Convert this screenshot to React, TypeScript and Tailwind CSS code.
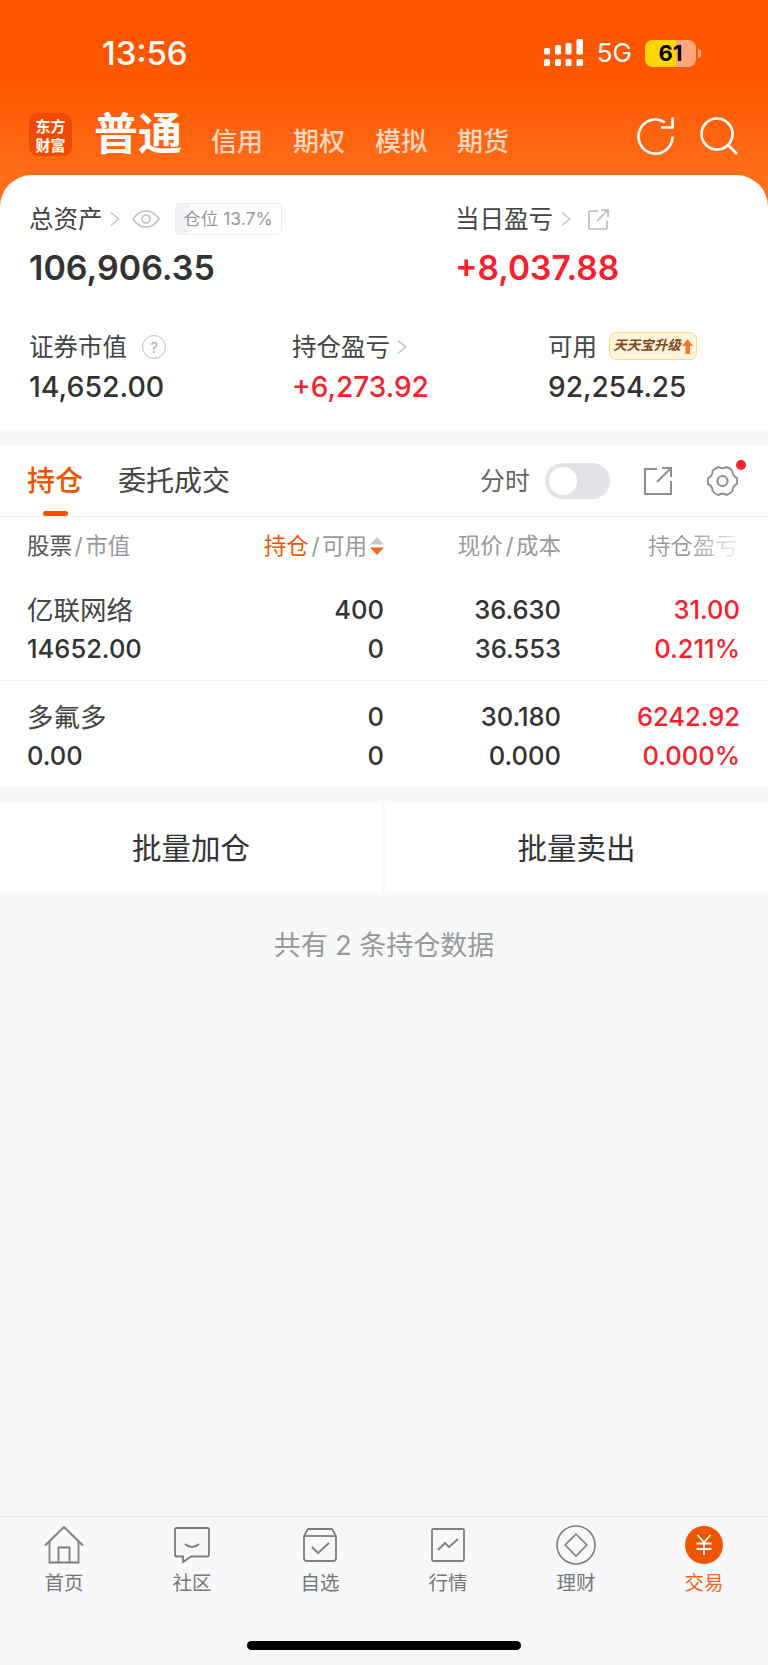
import React from "react";

const RED = "text-[#f5222d]";

function Chevron({ className = "" }: { className?: string }) {
  return (
    <svg width="10" height="16" viewBox="0 0 10 16" fill="none" className={className}>
      <path d="M1 1.5 L8.5 8 L1 14.5" stroke="#c4c4c4" strokeWidth="1.6" />
    </svg>
  );
}

function SignalIcon() {
  return (
    <svg width="40" height="28" viewBox="0 0 40 28" fill="#fff">
      <rect x="0" y="9" width="6" height="6.5" rx="1.5" />
      <rect x="11" y="6" width="6" height="9.5" rx="1.5" />
      <rect x="21.5" y="4" width="6" height="11.5" rx="1.5" />
      <rect x="32.5" y="0" width="6.5" height="15.5" rx="1.5" />
      <rect x="0" y="20" width="6" height="7" rx="1.5" />
      <rect x="11" y="20" width="6" height="7" rx="1.5" />
      <rect x="21.5" y="20" width="6" height="7" rx="1.5" />
      <rect x="32.5" y="20" width="6.5" height="7" rx="1.5" />
    </svg>
  );
}

function Battery() {
  return (
    <div className="flex items-center ml-[13px]">
      <div className="relative w-[51px] h-[27px] rounded-[8px] overflow-hidden bg-[#ffa67f] flex items-center justify-center">
        <div className="absolute left-0 top-0 bottom-0 w-[31px] bg-[#ffd60a]" />
        <span className="relative text-[22px] leading-none font-bold text-black">61</span>
      </div>
      <div className="w-[3px] h-[9px] ml-[2px] rounded-r-full bg-[#ffa67f]" />
    </div>
  );
}

function RefreshIcon() {
  return (
    <svg width="39" height="38" viewBox="0 0 39 38" fill="none" stroke="#fff" strokeWidth="2.6">
      <path d="M35.5 19.5 A17 17 0 1 1 28 5.5" />
      <path d="M24 10.5 H35.5 V0.5" />
    </svg>
  );
}

function SearchIcon() {
  return (
    <svg width="38" height="38" viewBox="0 0 38 38" fill="none" stroke="#fff" strokeWidth="2.6">
      <circle cx="17" cy="17" r="15.5" />
      <path d="M28 28 L37 37" />
    </svg>
  );
}

function EyeIcon() {
  return (
    <svg width="28" height="18" viewBox="0 0 28 18" fill="none" stroke="#c2c2c2" strokeWidth="1.6">
      <path d="M1 9 C5 3 9 1 14 1 C19 1 23 3 27 9 C23 15 19 17 14 17 C9 17 5 15 1 9 Z" />
      <circle cx="14" cy="9" r="4" />
    </svg>
  );
}

function SmallShare() {
  return (
    <svg width="21" height="21" viewBox="0 0 21 21" fill="none" stroke="#bdbdbd" strokeWidth="1.7">
      <path d="M10 2 H3 Q1 2 1 4 V18 Q1 20 3 20 H17 Q19 20 19 18 V12" />
      <path d="M9 12 L19.5 1.5 M13 1.2 H20 V8" />
    </svg>
  );
}

function ShareIcon() {
  return (
    <svg width="28" height="28" viewBox="0 0 28 28" fill="none" stroke="#8f8f8f" strokeWidth="2">
      <path d="M13 2 H1 V27 H27 V14" />
      <path d="M13 15 L26.5 1.5 M18 1 H27 V10" />
    </svg>
  );
}

function GearIcon() {
  return (
    <svg width="33" height="32" viewBox="0 0 33 32" fill="none" stroke="#8f8f8f" strokeWidth="1.9">
      <path d="M12.5 2 C14.5 3.6 18.5 3.6 20.5 2 C23 2.8 25 4 26.5 6 C26 8.6 28 12 30.8 13 C31.4 15.2 31.4 16.8 30.8 19 C28 20 26 23.4 26.5 26 C25 28 23 29.2 20.5 30 C18.5 28.4 14.5 28.4 12.5 30 C10 29.2 8 28 6.5 26 C7 23.4 5 20 2.2 19 C1.6 16.8 1.6 15.2 2.2 13 C5 12 7 8.6 6.5 6 C8 4 10 2.8 12.5 2 Z" />
      <circle cx="16.5" cy="16" r="5" strokeWidth="2.2" />
    </svg>
  );
}

function SortIcon() {
  return (
    <svg width="14" height="18" viewBox="0 0 14 18" className="ml-[3px]">
      <path d="M7 0 L14 7.5 H0 Z" fill="#c9c9c9" />
      <path d="M0 10.5 H14 L7 18 Z" fill="#f2661b" />
    </svg>
  );
}

const navIcons: Record<string, React.ReactNode> = {
  home: (
    <svg width="40" height="38" viewBox="0 0 40 38" fill="none" stroke="#7d7d7d" strokeWidth="1.8">
      <path d="M1 19.5 L20 1 L39 19.5" />
      <path d="M5.5 15.5 V36.5 H34.5 V15.5" />
      <path d="M14.5 36.5 V21.5 H25.5 V36.5" />
    </svg>
  ),
  chat: (
    <svg width="36" height="36" viewBox="0 0 36 36" fill="none" stroke="#7d7d7d" strokeWidth="1.8">
      <path d="M2.5 1 H33.5 Q35 1 35 2.5 V28 Q35 29.5 33.5 29.5 H17 L9 35 V29.5 H2.5 Q1 29.5 1 28 V2.5 Q1 1 2.5 1 Z" />
      <path d="M11 17 Q18 23 25 17" />
    </svg>
  ),
  watch: (
    <svg width="34" height="34" viewBox="0 0 34 34" fill="none" stroke="#7d7d7d" strokeWidth="1.8">
      <path d="M5 1 H29 L33 8 V30 Q33 33 30 33 H4 Q1 33 1 30 V8 Z" />
      <path d="M1 8 H33" />
      <path d="M9 19 L15 25 L26 15" />
    </svg>
  ),
  market: (
    <svg width="34" height="34" viewBox="0 0 34 34" fill="none" stroke="#7d7d7d" strokeWidth="1.8">
      <rect x="1" y="1" width="32" height="32" rx="1.5" />
      <path d="M7 22 L14 15 L18 19 L27 11" />
    </svg>
  ),
  finance: (
    <svg width="40" height="40" viewBox="0 0 40 40" fill="none" stroke="#7d7d7d" strokeWidth="1.6">
      <circle cx="20" cy="20" r="19" />
      <path d="M20 9 L31 20 L20 31 L9 20 Z" strokeLinejoin="round" />
    </svg>
  ),
  trade: (
    <svg width="38" height="38" viewBox="0 0 38 38" fill="none">
      <circle cx="19" cy="19" r="19" fill="#ee5500" />
      <path d="M12.5 9 L19 16.5 L25.5 9 M19 16.5 V29 M11.5 17.5 H26.5 M11.5 23 H26.5" stroke="#fff" strokeWidth="1.8" />
    </svg>
  ),
};

const navItems = [
  { key: "home", label: "首页" },
  { key: "chat", label: "社区" },
  { key: "watch", label: "自选" },
  { key: "market", label: "行情" },
  { key: "finance", label: "理财" },
  { key: "trade", label: "交易", active: true },
];

const positions = [
  { name: "亿联网络", value: "14652.00", hold: "400", avail: "0", price: "36.630", cost: "36.553", pl: "31.00", pct: "0.211%" },
  { name: "多氟多", value: "0.00", hold: "0", avail: "0", price: "30.180", cost: "0.000", pl: "6242.92", pct: "0.000%" },
];

const subTabs = ["信用", "期权", "模拟", "期货"];

export default function App() {
  return (
    <div className="w-[768px] h-[1665px] flex flex-col overflow-hidden bg-[#f7f8fa] text-[#333] font-['Inter','Noto_Sans_CJK_SC',sans-serif]">
      <div className="bg-[linear-gradient(180deg,#ff5500_0px,#ff5600_70px,#ff7420_210px)]">
        {/* 状态栏 */}
        <div className="h-[103px] flex items-center pt-[3px] pl-[102px] pr-[67px] text-white">
          <span className="text-[33px] leading-none font-medium">13:56</span>
          <div className="ml-auto flex items-center">
            <SignalIcon />
            <span className="ml-[13px] text-[26px] leading-none">5G</span>
            <Battery />
          </div>
        </div>

        {/* 账户类型 */}
        <div className="h-[72px] flex items-start pl-[29px] pr-[30px] text-white">
          <div className="mt-[10px] w-[43px] h-[43px] rounded-[9px] bg-[#f04a06] flex flex-col items-center justify-center text-[15px] leading-[19px] font-bold font-['Noto_Sans_CJK_SC',sans-serif]">
            <span>东方</span>
            <span>财富</span>
          </div>
          <span className="ml-[22px] mt-[3px] text-[44px] leading-[56px] font-bold">普通</span>
          <div className="ml-[29px] mt-[17px] flex gap-[30px] text-[26px] leading-[44px] font-medium text-[#ffd6c0]">
            {subTabs.map((t) => (
              <span key={t}>{t}</span>
            ))}
          </div>
          <div className="ml-auto mt-[14px] flex gap-[24px]">
            <RefreshIcon />
            <SearchIcon />
          </div>
        </div>

        {/* 资产卡片 */}
        <div className="bg-white rounded-t-[32px] pt-[28px] pl-[29px] pb-[26px]">
          <div className="grid grid-cols-[426px_1fr]">
            <div>
              <div className="h-[32px] flex items-center text-[24.5px] leading-none text-[#444]">
                <span>总资产</span>
                <Chevron className="ml-[7px]" />
                <span className="ml-[12px]"><EyeIcon /></span>
                <div className="ml-[15px] w-[107px] h-[32px] rounded-[5px] border border-[#ececec] bg-[linear-gradient(90deg,#f3f4f8_14px,#fff_14px)] flex items-center justify-center text-[17.5px] text-[#999] whitespace-nowrap">
                  仓位 13.7%
                </div>
              </div>
              <div className="mt-[13px] text-[34px] leading-[40px] font-semibold">106,906.35</div>
            </div>
            <div>
              <div className="h-[32px] flex items-center text-[24.5px] leading-none text-[#444]">
                <span>当日盈亏</span>
                <Chevron className="ml-[8px]" />
                <span className="ml-[17px]"><SmallShare /></span>
              </div>
              <div className={`mt-[13px] text-[33.5px] leading-[40px] font-semibold ${RED}`}>+8,037.88</div>
            </div>
          </div>

          <div className="mt-[44px] grid grid-cols-[263px_256px_1fr]">
            <div>
              <div className="h-[30px] flex items-center text-[24.5px] leading-none text-[#444]">
                <span>证券市值</span>
                <span className="ml-[15px] w-[24px] h-[24px] rounded-full border-[1.5px] border-[#bdbdbd] flex items-center justify-center text-[15px] text-[#aaa]">?</span>
              </div>
              <div className="mt-[7px] text-[28.5px] leading-[36px] font-medium">14,652.00</div>
            </div>
            <div>
              <div className="h-[30px] flex items-center text-[24.5px] leading-none text-[#444]">
                <span>持仓盈亏</span>
                <Chevron className="ml-[7px]" />
              </div>
              <div className={`mt-[7px] text-[28px] leading-[36px] font-medium ${RED}`}>+6,273.92</div>
            </div>
            <div>
              <div className="h-[30px] flex items-center text-[24.5px] leading-none text-[#444]">
                <span>可用</span>
                <div className="ml-[12px] mb-[2px] w-[88px] h-[28px] rounded-[7px] border-[1.5px] border-[#ffd98a] bg-[#fff3dc] flex items-center justify-center text-[#7b4a1e] text-[13.5px] font-bold italic whitespace-nowrap">
                  天天宝升级
                  <svg width="11" height="15" viewBox="0 0 11 15" className="ml-[1px]">
                    <path d="M5.5 0 L11 7 H8 V15 H3.5 V7 H0 Z" fill="#f4772b" />
                  </svg>
                </div>
              </div>
              <div className="mt-[7px] text-[28px] leading-[36px] font-medium">92,254.25</div>
            </div>
          </div>
        </div>
      </div>

      {/* 持仓列表 */}
      <div className="mt-[14px] bg-white">
        <div className="relative h-[72px] flex items-center pl-[27px] pr-[29px] pt-[1px] border-b border-[#efefef]">
          <span className="text-[28px] leading-none font-medium text-[#ee5500]">持仓</span>
          <span className="ml-[35px] text-[28px] leading-none text-[#444]">委托成交</span>
          <div className="absolute left-[43px] bottom-0 w-[25px] h-[5px] rounded-full bg-[#ee5500]" />
          <span className="ml-auto text-[25px] leading-none text-[#666]">分时</span>
          <div className="ml-[15px] w-[65px] h-[36px] rounded-full bg-[#e2e3e6] p-[4px]">
            <div className="w-[28px] h-[28px] rounded-full bg-white" />
          </div>
          <span className="ml-[34px]"><ShareIcon /></span>
          <div className="relative ml-[34px]">
            <GearIcon />
            <div className="absolute -top-[5px] -right-[7px] w-[10px] h-[10px] rounded-full bg-[#f5222d]" />
          </div>
        </div>

        <div className="h-[58px] grid grid-cols-[187px_170px_177px_177px] items-center pl-[27px] pr-[30px] text-[22.5px] leading-none text-[#999]">
          <div><span className="text-[#555]">股票</span><span className="mx-[2.5px]">/</span>市值</div>
          <div className="flex items-center justify-end">
            <span className="text-[#ee5500]">持仓</span><span className="mx-[2.5px]">/</span>可用<SortIcon />
          </div>
          <div className="text-right">现价<span className="mx-[2.5px]">/</span>成本</div>
          <div className="text-right bg-[linear-gradient(90deg,#999_72%,#f0f0f0_100%)] bg-clip-text text-transparent">持仓盈亏</div>
        </div>

        {positions.map((p, i) => (
          <div
            key={p.name}
            className={`grid grid-cols-[187px_170px_177px_179px] gap-y-[3px] pl-[27px] pr-[28px] pb-[13px] text-[25.5px] leading-[36px] font-medium ${i === 0 ? "pt-[17px] border-b border-[#f3f3f3]" : "pt-[18px]"}`}
          >
            <div className="text-[26.5px] font-normal text-[#444] whitespace-nowrap">{p.name}</div>
            <div className="text-right">{p.hold}</div>
            <div className="text-right">{p.price}</div>
            <div className={`text-right ${RED}`}>{p.pl}</div>
            <div className="whitespace-nowrap">{p.value}</div>
            <div className="text-right">{p.avail}</div>
            <div className="text-right">{p.cost}</div>
            <div className={`text-right ${RED}`}>{p.pct}</div>
          </div>
        ))}
      </div>

      {/* 批量操作 */}
      <div className="mt-[16px] h-[89px] grid grid-cols-[382px_383px] gap-x-[3px] text-[29.5px]">
        <div className="bg-white flex items-center justify-center pt-[1px] text-[#333]">批量加仓</div>
        <div className="bg-white flex items-center justify-center pt-[1px] text-[#333]">批量卖出</div>
      </div>

      <div className="flex-1 pt-[36px] text-center text-[27px] leading-[36px] text-[#999]">共有 2 条持仓数据</div>

      {/* 底部导航 */}
      <div className="border-t border-[#e6e9ec] bg-[#f8f8fb] pt-[6px] pb-[15px]">
        <div className="grid grid-cols-6">
          {navItems.map((item) => (
            <div key={item.key} className="flex flex-col items-center">
              <div className="h-[44px] flex items-center justify-center">{navIcons[item.key]}</div>
              <span className={`mt-[3px] text-[19.5px] leading-[26px] ${item.active ? "text-[#f2661b]" : "text-[#777]"}`}>
                {item.label}
              </span>
            </div>
          ))}
        </div>
        <div className="mt-[45px] mx-auto w-[274px] h-[9px] rounded-full bg-black" />
      </div>
    </div>
  );
}
